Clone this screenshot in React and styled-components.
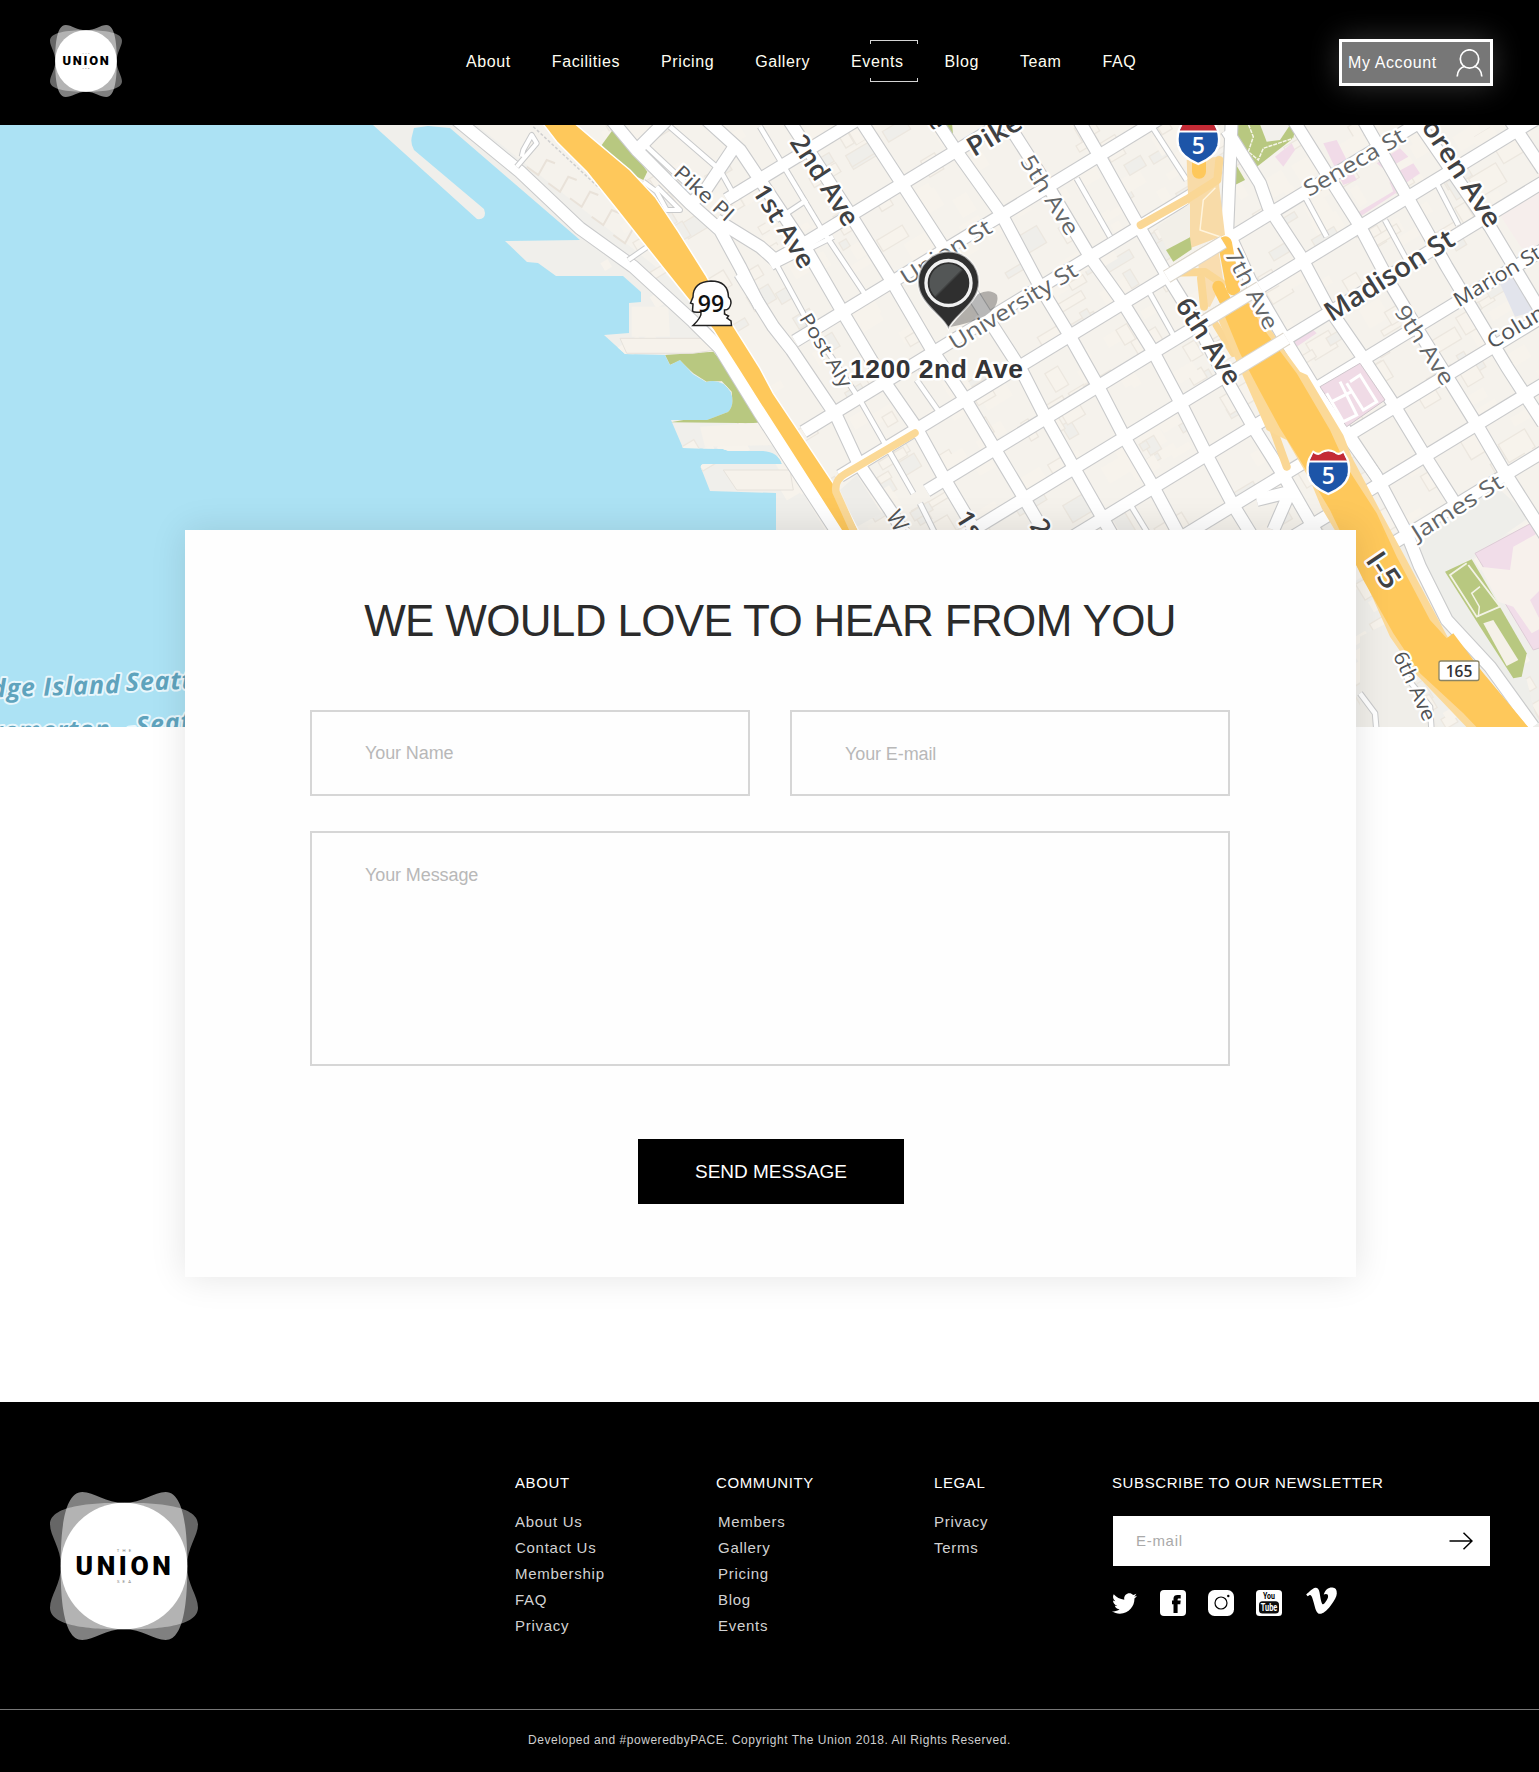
import React from "react";
import styled, { createGlobalStyle } from "styled-components";
import { FaTwitter, FaVimeoV } from "react-icons/fa";

const GlobalStyle = createGlobalStyle`
  *, *::before, *::after { box-sizing: border-box; }
  body { margin: 0; background: #fff; font-family: "Liberation Sans", Arial, Helvetica, sans-serif; }
  input, textarea, button { font-family: inherit; border-radius: 0; outline: none; }
`;

const Page = styled.div`
  width: 1539px;
  height: 1772px;
  display: flex;
  flex-direction: column;
  overflow: hidden;
`;

/* ---------- header ---------- */

const Header = styled.header`
  flex: none;
  height: 125px;
  padding: 0 46px 0 50px;
  display: flex;
  align-items: center;
  background: #000;
`;

const LogoSvg = styled.svg`
  display: block;
  flex: none;
  width: ${(p) => p.$size}px;
  height: ${(p) => p.$size}px;
  margin-bottom: ${(p) => p.$lift || 0}px;
`;

const Nav = styled.nav`
  display: flex;
  gap: 41px;
  margin: 0 0 1px 344px;
`;

const NavLink = styled.a`
  position: relative;
  font-size: 16px;
  line-height: 20px;
  letter-spacing: 0.6px;
  color: #fffef2;
`;

const ActiveNavLink = styled(NavLink)`
  &::before,
  &::after {
    content: "";
    position: absolute;
    left: 19px;
    width: 48px;
    height: 4px;
    border: 1px solid #d4d4d4;
  }
  &::before {
    top: -12px;
    border-bottom: 0;
  }
  &::after {
    top: 26px;
    border-top: 0;
  }
`;

const AccountButton = styled.button`
  display: flex;
  align-items: center;
  justify-content: space-between;
  width: 154px;
  height: 47px;
  margin-left: auto;
  padding: 0 7px 0 6px;
  border: 3px solid #fff;
  background: #777;
  color: #fff;
  font-size: 16px;
  letter-spacing: 0.6px;
  box-shadow: 0 0 30px rgba(255, 255, 255, 0.2);
`;

/* ---------- map ---------- */

const MapArea = styled.section`
  flex: none;
  height: 602px;
`;

const MapSvg = styled.svg`
  display: block;
  width: 1539px;
  height: 602px;
`;

/* ---------- contact card ---------- */

const Card = styled.form`
  position: relative;
  flex: none;
  display: flex;
  flex-direction: column;
  width: 1171px;
  height: 747px;
  margin: -197px 0 125px 185px;
  padding: 65px 126px 0 125px;
  background: #fefefe;
  box-shadow: 0 0 34px rgba(0, 0, 0, 0.11);
`;

const Title = styled.h1`
  margin: 0 0 63px;
  font-size: 44px;
  font-weight: 400;
  line-height: 52px;
  letter-spacing: -0.65px;
  text-align: center;
  white-space: nowrap;
  color: #2b2b2b;
`;

const FieldRow = styled.div`
  display: flex;
  gap: 40px;
`;

const Input = styled.input`
  flex: 1;
  min-width: 0;
  height: 86px;
  padding: ${(p) => p.$drop || 0}px 53px 0;
  border: 2px solid #d6d6d6;
  background: transparent;
  font-size: 18px;
  letter-spacing: -0.1px;
  &::placeholder {
    color: #b8b8b8;
    opacity: 1;
  }
`;

const TextArea = styled.textarea`
  height: 235px;
  margin: 35px 0 73px;
  padding: 31px 53px;
  border: 2px solid #d6d6d6;
  background: transparent;
  font-size: 18px;
  line-height: 22px;
  letter-spacing: -0.1px;
  resize: none;
  &::placeholder {
    color: #b8b8b8;
    opacity: 1;
  }
`;

const SendButton = styled.button`
  width: 266px;
  height: 65px;
  margin-left: 328px;
  padding: 0;
  border: 0;
  background: #000;
  color: #fff;
  font-size: 19px;
`;

/* ---------- footer ---------- */

const Footer = styled.footer`
  flex: 1;
  background: #000;
  color: #fff;
`;

const FooterMain = styled.div`
  display: grid;
  grid-template-columns: 465px 201px 218px 178px 378px;
  height: 307px;
  padding-left: 50px;
  align-items: start;
`;

const FooterLogo = styled.div`
  padding-top: 90px;
`;

const Column = styled.div`
  padding-top: 68px;
`;

const ColumnTitle = styled.h2`
  margin: 0;
  font-size: 15px;
  font-weight: 400;
  line-height: 26px;
  letter-spacing: 0.6px;
  white-space: nowrap;
`;

const LinkList = styled.ul`
  list-style: none;
  margin: 13px 0 0 ${(p) => p.$indent || 0}px;
  padding: 0;
`;

const LinkItem = styled.li`
  font-size: 15px;
  line-height: 26px;
  letter-spacing: 0.72px;
  color: #d2d2d2;
`;

const Newsletter = styled.div`
  display: flex;
  align-items: center;
  justify-content: space-between;
  width: 377px;
  height: 50px;
  margin: 20px 0 0 1px;
  padding: 0 17px 0 0;
  background: #fff;
`;

const NewsletterInput = styled.input`
  flex: 1;
  min-width: 0;
  padding: 0 0 2px 23px;
  border: 0;
  background: transparent;
  font-size: 15px;
  letter-spacing: 0.7px;
  &::placeholder {
    color: #a9a9a9;
    opacity: 1;
  }
`;

const Socials = styled.div`
  display: flex;
  align-items: center;
  height: 26px;
  margin-top: 24px;
  svg {
    display: block;
    flex: none;
  }
`;

const SocialSlot = styled.span`
  display: block;
  width: 48px;
  margin-bottom: ${(p) => p.$lift || 0}px;
`;

const Copyright = styled.div`
  border-top: 1px solid #777;
  height: 63px;
  display: flex;
  justify-content: center;
  padding-top: 21px;
  font-size: 12px;
  line-height: 18px;
  letter-spacing: 0.53px;
  color: #cfcfcf;
`;

const LOBE =
  "M74 10.7C48 10.7 0 12 0 32.3C0 44 11 56 11 74C11 92 0 104 0 115.7C0 136 48 137.3 74 137.3C100 137.3 148 136 148 115.7C148 104 137 92 137 74C137 56 148 44 148 32.3C148 12 100 10.7 74 10.7Z";

function Logo({ size, lift }) {
  return (
    <LogoSvg $size={size} $lift={lift} viewBox="0 0 148 148">
      <path d={LOBE} fill="#fff" opacity="0.4" />
      <path d={LOBE} fill="#fff" opacity="0.5" transform="rotate(90 74 74)" />
      <circle cx="74" cy="74" r="63.3" fill="#fff" />
      <text x="75.5" y="59.5" fontSize="4.2" textAnchor="middle" letterSpacing="3.2" fill="#777" fontFamily="Roboto, sans-serif">THE</text>
      <text x="25.5" y="83" fontSize="25.5" fontWeight="900" letterSpacing="3.5" textLength="99" lengthAdjust="spacingAndGlyphs" fill="#000" fontFamily="Roboto, sans-serif">UNION</text>
      <text x="75.5" y="90.5" fontSize="4.2" textAnchor="middle" letterSpacing="3.2" fill="#777" fontFamily="Roboto, sans-serif">SEA</text>
    </LogoSvg>
  );
}

/* ---------- map data ----------
   Points are in tiles drawn at three times the page scale, each with its own origin. */

const tile = (ox, oy) => (pts) =>
  pts.map(([x, y]) => `${(ox + x / 3).toFixed(1)},${(oy + y / 3).toFixed(1)}`).join(" ");
const west = tile(360, 120);
const mid = tile(740, 120);
const east = tile(1130, 120);
const south = tile(1130, 420);

const street = (c, from, to) => mid([[from, c - 0.61 * from], [to, c - 0.61 * to]]);

const STREETS = [
  street(214, -40, 400),
  street(488, 90, 900),
  street(764, 165, 1300),
  street(1051, 190, 1360),
  street(1251, 300, 2100),
  street(1454, 560, 2500),
  street(1656, 700, 2500),
  street(1859, 900, 2500),
  street(2059, 1100, 2500),
  street(2262, 1300, 2500),
  street(2465, 1850, 2500),
];

const AVENUES = [
  west([[1030, -10], [1140, 90], [1340, 390], [1450, 580], [1570, 780], [1670, 925], [1750, 1070], [1850, 1240]]),
  mid([[0, 460], [100, 620], [155, 690], [290, 890], [355, 1030], [450, 1170], [500, 1250]]),
  mid([[140, -10], [332, 285], [455, 483], [573, 685], [680, 845], [765, 988], [850, 1130], [920, 1250]]),
  mid([[355, -10], [485, 190], [615, 390], [750, 605], [845, 752], [917, 893], [1000, 1040], [1120, 1250]]),
  mid([[580, -10], [650, 95], [785, 284], [900, 500], [985, 640], [1075, 800], [1155, 955], [1240, 1100], [1320, 1250]]),
  mid([[790, -10], [925, 200], [1050, 410], [1150, 550], [1240, 695], [1322, 850], [1400, 1005], [1480, 1156], [1550, 1270]]),
  mid([[1010, -10], [1085, 120], [1180, 290], [1280, 465], [1370, 610], [1460, 780], [1545, 930], [1630, 1065], [1730, 1240]]),
  east([[305, 0], [292, 330], [360, 480], [460, 650], [545, 790], [640, 930], [740, 1070]]),
  east([[290, 30], [390, 190], [415, 260], [510, 405], [590, 555], [690, 700], [795, 860], [880, 1000], [975, 1150]]),
  east([[490, 0], [590, 160], [685, 310], [780, 490], [870, 640], [970, 800], [1050, 930], [1120, 1050], [1260, 1270]]),
  east([[700, 0], [840, 245], [950, 440], [1040, 590], [1130, 740], [1240, 910]]),
  east([[860, 0], [1080, 320], [1170, 470], [1260, 620]]),
  east([[1140, 0], [1240, 150]]),
  west([[755, 0], [830, 90], [900, 160], [990, 250], [1080, 330], [1140, 440], [1200, 560]]),
  west([[1070, 300], [1200, 380], [1245, 420], [1300, 390]]),
  west([[830, 90], [920, 0]]),
  west([[1130, 70], [1030, 220], [990, 250]]),
  south([[380, 240], [480, 215], [430, 330]]),
  south([[640, 20], [740, 170], [830, 340], [870, 440], [950, 600], [1080, 740], [1210, 920]]),
];

const ALLEYS = [
  west([[850, 70], [1010, 220]]),
  west([[930, 20], [1080, 150], [1130, 240]]),
  mid([[60, 20], [240, 320], [380, 530]]),
  mid([[110, 435], [200, 600], [360, 840], [520, 1120]]),
  mid([[110, 435], [280, 350]]),
  mid([[110, 300], [200, 240]]),
  mid([[530, 780], [600, 880]]),
  mid([[540, 1150], [590, 1250]]),
  mid([[1010, 175], [1110, 350]]),
  east([[60, 10], [170, 180]]),
  east([[60, 520], [130, 645]]),
  east([[525, 230], [590, 350]]),
  east([[765, 300], [830, 420]]),
  east([[920, 190], [985, 315]]),
  south([[5, 260], [60, 350]]),
  south([[690, 820], [735, 880], [740, 940]]),
  south([[820, 760], [900, 860], [905, 940]]),
];

const PARCELS = [];
let seed = 11;
const rand = () => {
  seed = (seed * 16807) % 2147483647;
  return seed / 2147483647;
};
for (let i = 0; i < 560; i += 1) {
  PARCELS.push({
    x: 600 + rand() * 939,
    y: 120 + rand() * 600,
    w: 8 + rand() * 24,
    h: 6 + rand() * 16,
    kind: rand(),
  });
}

const TONES = {
  dark: { fill: "#3f4143", weight: 600 },
  mid: { fill: "#505355", weight: 500 },
  soft: { fill: "#626567", weight: 400 },
};

const LABELS = [
  ["Pike Pl", 704, 193, 42, 72, 20, "mid"],
  ["1st Ave", 784, 226, 58, 94, 25, "dark"],
  ["2nd Ave", 825, 180, 57, 103, 26, "dark"],
  ["Post Aly", 826, 350, 59, 83, 19, "mid"],
  ["5th Ave", 1050, 195, 58, 90, 22, "soft"],
  ["4th Ave", 917, 87, 58, 94, 25, "dark"],
  ["Union St", 946, 252, -32, 103, 22, "soft"],
  ["University St", 1013, 306, -31.5, 146, 22, "soft"],
  ["Pike St", 1009, 125, -31, 94, 27, "dark"],
  ["Western Ave", 925, 566, 59, 126, 23, "mid"],
  ["1st Ave", 987, 552, 58, 94, 25, "dark"],
  ["2nd Ave", 1065, 564, 57, 103, 26, "dark"],
  ["Seneca St", 1354, 162, -30, 113, 22, "soft"],
  ["Boren Ave", 1457, 165, 57, 142, 26, "dark"],
  ["Madison St", 1389, 275, -32, 148, 27, "dark"],
  ["Marion St", 1497, 276, -31, 98, 20, "mid"],
  ["Columbia St", 1545, 309, -31, 132, 21, "mid"],
  ["9th Ave", 1425, 345, 57, 90, 22, "soft"],
  ["7th Ave", 1252, 289, 62, 88, 22, "soft"],
  ["6th Ave", 1209, 341, 57, 98, 26, "dark"],
  ["James St", 1457, 507, -32, 103, 22, "soft"],
  ["I-5", 1384, 570, 56, 38, 29, "dark"],
  ["6th Ave", 1415, 686, 65, 74, 20, "mid"],
];

const LAND =
  "M373 125L477 219Q485 220 485 213L484 209L414 150Q410 143 412 136L414 128L428 126L450 128L580 240L505 241L527 262L538 263L556 276L623 276L641 292V302L629 303V333L604 335L625 354L665 355L670 365L680 360L693 374L706 382Q722 378 731 392Q735 405 728 412L707 420H671L683 448L723 449L729 451L763 451Q778 452 782 464H705Q700 464 701 468L710 491L776 493V727H1539V125Z";

function Interstate({ x, y }) {
  return (
    <g transform={`translate(${x} ${y})`}>
      <path
        d="M-15 -21Q-10 -17 -6 -21Q0 -24 6 -21Q10 -17 15 -21L19 -14Q22 -6 20 3Q17 14 0 21Q-17 14 -20 3Q-22 -6 -19 -14Z"
        fill="#1d55a8"
        stroke="#fff"
        strokeWidth="2.4"
      />
      <path d="M-15 -20Q-10 -16 -6 -20Q0 -23 6 -20Q10 -16 15 -20L18.5 -12H-18.5Z" fill="#c42a35" />
      <path d="M-19.5 -11.5H19.5" stroke="#fff" strokeWidth="1.8" />
      <text x="0" y="11" fontSize="23" fontWeight="600" textAnchor="middle" fill="#fff" fontFamily='"Open Sans", sans-serif'>5</text>
    </g>
  );
}

function CityMap() {
  return (
    <MapSvg viewBox="0 125 1539 602">
      <defs>
        <clipPath id="land"><path d={LAND} /></clipPath>
        <linearGradient id="pinFace" x1="0" y1="0" x2="1" y2="1">
          <stop offset="0.48" stopColor="#535656" />
          <stop offset="0.53" stopColor="#2f2f2f" />
        </linearGradient>
      </defs>
      <rect x="0" y="125" width="1539" height="602" fill="#ace2f4" />
      <path d={LAND} fill="#f0efeb" />

      <g clipPath="url(#land)">
        <polygon points={west([[330, 0], [1140, 640], [1200, 900], [1400, 1240], [3537, 1240], [3537, 2000], [3537, 0]])} fill="#f5f2ec" />
        {PARCELS.map((p, i) => (
          <rect
            key={i}
            x={p.x}
            y={p.y}
            width={p.w}
            height={p.h}
            transform={`rotate(-31 ${p.x} ${p.y})`}
            fill={p.kind > 0.78 ? "#efeeea" : "#f7f3ec"}
            stroke={p.kind > 0.5 ? "#ece7df" : "none"}
            strokeWidth="1.3"
          />
        ))}
        <polygon points={south([[840, 350], [1100, 200], [1200, 290], [1030, 410], [960, 450], [1050, 630], [1190, 780], [1227, 930], [1190, 900], [1060, 740], [930, 560]])} fill="#eeeeea" />
        <polygon points={south([[690, 650], [770, 610], [930, 930], [690, 930]])} fill="#f0eee9" />
        <polygon points={mid([[300, 1110], [350, 1065], [425, 1180], [350, 1220]])} fill="#eeede9" />

        <polygon points={west([[915, 705], [1060, 695], [1130, 780], [1200, 910], [932, 907], [1025, 890], [1080, 870], [1115, 850], [1115, 815], [1085, 783], [1040, 785], [1000, 760], [960, 722], [930, 735]])} fill="#b8c880" />
        <polygon points={west([[725, 75], [765, 20], [830, 110], [862, 155], [850, 180], [800, 155]])} fill="#b8c880" />
        <polygon points={mid([[610, 0], [635, 0], [640, 50]])} fill="#b8c880" />
        <polygon points={east([[315, 0], [500, 0], [490, 55], [375, 145], [315, 70]])} fill="#b8c880" />
        <polygon points={east([[385, 0], [490, 0], [450, 60], [410, 65]])} fill="#f2f0eb" />
        <polyline points={east([[350, 0], [370, 50], [355, 95], [385, 120], [400, 85], [490, 55]])} fill="none" stroke="#f5f5e8" strokeWidth="1.5" strokeDasharray="4 1" />
        <polygon points={east([[310, 120], [345, 180], [315, 195]])} fill="#b8c880" />
        <polygon points={south([[945, 455], [1025, 418], [1115, 570], [1190, 700], [1175, 770], [1150, 775], [1050, 620]])} fill="#b8c880" />
        <polyline points={south([[1010, 430], [960, 465], [1040, 590], [1110, 560], [1015, 435]])} fill="none" stroke="#f3f3e6" strokeWidth="1.8" />
        <polyline points={south([[1050, 500], [1025, 520], [1048, 560], [1045, 590]])} fill="none" stroke="#f3f3e6" strokeWidth="1.5" />
        <polygon points={south([[1060, 610], [1090, 600], [1165, 720], [1130, 738]])} fill="#f5f1e8" />

        <polygon points={east([[435, 110], [485, 70], [495, 90], [460, 140]])} fill="#f1dbe8" />
        <polygon points={east([[580, 70], [620, 60], [680, 180], [640, 195]])} fill="#f1dbe8" />
        <polygon points={east([[740, 130], [810, 85], [835, 110], [765, 150]])} fill="#f1dbe8" />
        <polygon points={east([[775, 170], [850, 130], [870, 160], [790, 215]])} fill="#f1dbe8" />
        <polygon points={east([[680, 280], [830, 190], [820, 205], [690, 290]])} fill="#f1dbe8" />
        <polygon points={east([[1100, 270], [1240, 190], [1240, 380], [1175, 385]])} fill="#f6eeec" />
        <polygon points={east([[485, 660], [545, 625], [560, 640], [500, 680]])} fill="#f1dbe8" />
        <polygon points={east([[1105, 480], [1145, 450], [1227, 570], [1155, 590]])} fill="#e2e4ec" />
        <polygon points={south([[1035, 400], [1240, 290], [1240, 680], [1210, 690]])} fill="#f1dde9" stroke="#ddccd6" />
        <polygon points={south([[1050, 440], [1140, 450], [1150, 380], [1240, 330], [1240, 500], [1200, 540], [1240, 620], [1205, 640], [1150, 560], [1105, 545]])} fill="#f7f1ec" />

        <g fill="none" stroke="#c9cacb" strokeLinejoin="round">
          <g strokeWidth="14">
            {STREETS.map((d, i) => <polyline key={i} points={d} />)}
            {AVENUES.map((d, i) => <polyline key={i} points={d} />)}
          </g>
          <g strokeWidth="6.5">{ALLEYS.map((d, i) => <polyline key={i} points={d} />)}</g>
        </g>
        <g fill="none" stroke="#fff" strokeLinejoin="round">
          <g strokeWidth="11.8">
            {STREETS.map((d, i) => <polyline key={i} points={d} />)}
            {AVENUES.map((d, i) => <polyline key={i} points={d} />)}
          </g>
          <g strokeWidth="4.5">{ALLEYS.map((d, i) => <polyline key={i} points={d} />)}</g>
        </g>

        <polygon points={east([[570, 800], [690, 730], [765, 840], [650, 920]])} fill="#f0dbe6" stroke="#cfc6cc" />
        <polyline points={east([[590, 820], [640, 905], [680, 885], [630, 785]])} fill="none" stroke="#fff" strokeWidth="3" />
        <polyline points={east([[650, 790], [700, 870], [740, 845], [690, 765], [660, 785]])} fill="none" stroke="#fff" strokeWidth="3" />
        <polyline points={east([[605, 845], [665, 815]])} fill="none" stroke="#fff" strokeWidth="3" />

        {/* waterfront piers and quay */}
        <polygon points={west([[780, 655], [1040, 655], [1065, 690], [1000, 700], [800, 700]])} fill="#f6f2eb" stroke="#e6e2db" />
        <polygon points={west([[815, 560], [925, 560], [930, 650], [815, 650]])} fill="#f6f2eb" />
        <polygon points={west([[1020, 920], [1240, 905], [1260, 975], [1035, 980]])} fill="#f6f2eb" />
        <polygon points={west([[1090, 1050], [1290, 1050], [1300, 1110], [1130, 1110]])} fill="#f6f2eb" stroke="#e6e2db" />
        {[[510, 120], [575, 170], [640, 215], [705, 270], [770, 325]].map(([x, y]) => (
          <polyline key={x} points={west([[x - 10, y + 20], [x + 25, y + 45], [x + 50, y], [x + 75, y + 10]])} fill="none" stroke="#e9e2d9" strokeWidth="2" />
        ))}
        <polyline points={west([[520, 20], [730, 215]])} fill="none" stroke="#cfcfcf" strokeWidth="1.5" strokeDasharray="3 2" />
        <g fill="none" strokeLinejoin="round">
          {[["#c9cacb", 14], ["#fff", 12]].map(([c, w]) => (
            <polyline key={c} points={west([[285, -5], [480, 155], [660, 325], [820, 440], [1000, 605], [1080, 685], [1200, 880], [1290, 1020], [1440, 1250]])} stroke={c} strokeWidth={w} />
          ))}
          {[["#c9cacb", 6], ["#fff", 4]].map(([c, w]) => (
            <g key={c} stroke={c} strokeWidth={w}>
              <polyline points={west([[470, 140], [500, 105], [530, 70], [515, 45], [490, 90], [485, 110]])} />
              <polyline points={west([[805, 420], [870, 375]])} />
              <polyline points={west([[850, 185], [890, 215], [920, 270], [960, 270], [890, 200]])} />
            </g>
          ))}
        </g>
      </g>

      {/* state route */}
      <polygon
        points={west([[540, 0], [632, 0], [705, 62], [810, 150], [885, 230], [955, 335], [1037, 465], [1115, 610], [1200, 745], [1240, 820], [1340, 970], [1420, 1090], [1500, 1240], [1450, 1240], [1290, 990], [1200, 850], [1140, 755], [1060, 630], [955, 500], [850, 368], [768, 265], [680, 155], [590, 65]])}
        fill="#fec85b"
        stroke="#fff"
        strokeWidth="1.5"
      />
      <path d="M915 433L845 474Q834 480 836 492L855 534" fill="none" stroke="#fbd996" strokeWidth="7.5" strokeLinecap="round" />

      {/* interstate */}
      <g strokeLinecap="round" strokeLinejoin="round">
        <polygon points={east([[170, 120], [265, 110], [268, 200], [285, 345], [180, 385], [175, 250]])} fill="#f8dba8" />
        <polygon points={east([[180, 250], [160, 265], [80, 320], [110, 390], [180, 350]])} fill="#f2efe8" />
        <polygon points={east([[108, 390], [180, 352], [185, 388], [130, 425]])} fill="#b8c880" />
        <polygon points={east([[205, 420], [265, 390], [280, 480], [240, 560], [210, 560]])} fill="#f9ddb0" />
        <polyline points={east([[255, 205], [220, 240], [210, 330], [270, 350]])} fill="none" stroke="#fff4dd" strokeWidth="1.5" />
        <g fill="none" stroke="#fad795">
          <polyline points={east([[32, 315], [170, 238], [262, 180], [268, 120]])} strokeWidth="8" />
          <polyline points={east([[122, 458], [225, 456], [275, 490]])} strokeWidth="8" />
          <polyline points={east([[213, 475], [222, 560]])} strokeWidth="8" />
          <polyline points={east([[258, 615], [310, 700]])} strokeWidth="7" />
          <polyline points={south([[420, 0], [470, 140]])} strokeWidth="8" />
        </g>
        <polygon
          points={east([[265, 600], [350, 540], [430, 640], [455, 680], [510, 755], [532, 765], [640, 945], [665, 1010], [760, 1190], [830, 1320], [955, 1555], [1060, 1660], [1195, 1822], [1010, 1822], [860, 1665], [780, 1550], [700, 1370], [620, 1240], [575, 1165], [540, 1080], [470, 960], [410, 930], [335, 760]])}
          fill="#fbd998"
        />
        <polygon
          points={east([[285, 590], [352, 545], [410, 640], [500, 760], [600, 930], [650, 1040], [740, 1180], [800, 1310], [900, 1500], [950, 1555], [970, 1540], [1060, 1660], [1195, 1822], [1040, 1822], [1000, 1780], [870, 1660], [790, 1540], [700, 1380], [600, 1170], [510, 1020], [450, 925], [385, 805], [330, 700]])}
          fill="#fec85b"
        />
        <polyline points={east([[207, 100], [207, 155]])} fill="none" stroke="#fec85b" strokeWidth="14" />
        <polyline points={east([[285, 370], [310, 505]])} fill="none" stroke="#fec85b" strokeWidth="14" />
        <polyline points={east([[265, 500], [295, 560]])} fill="none" stroke="#fec85b" strokeWidth="12" />
        <g fill="none" strokeLinecap="butt">
          {[["#dcd6cb", 14], ["#fff", 12]].map(([c, w]) => (
            <g key={c} stroke={c} strokeWidth={w}>
              <polyline points={street(1251, 1280, 1450)} />
              <polyline points={street(1454, 1400, 1560)} />
              <polyline points={street(1656, 1455, 1640)} />
            </g>
          ))}
        </g>
      </g>

      <g fontFamily='"Open Sans", "Noto Sans", sans-serif' stroke="#fff" strokeWidth="4.5" strokeLinejoin="round" paintOrder="stroke" textAnchor="middle">
        {LABELS.map(([text, x, y, angle, len, size, tone], i) => (
          <text
            key={i}
            transform={`translate(${x} ${y}) rotate(${angle})`}
            y={size * 0.36}
            fontSize={size}
            fontWeight={TONES[tone].weight}
            fill={TONES[tone].fill}
            textLength={len}
            lengthAdjust="spacingAndGlyphs"
          >
            {text}
          </text>
        ))}
        <g fontStyle="italic" fontWeight="700" fontSize="25" fill="#5fa3bd" stroke="#e9f7fc" strokeWidth="4" letterSpacing="0.9">
          <text transform="translate(121 693) rotate(-2)" textAnchor="end">Bainbridge Island</text>
          <text transform="translate(126 691) rotate(-2)" textAnchor="start">Seattle</text>
          <text transform="translate(111 738) rotate(-1)" textAnchor="end">Bremerton</text>
          <text transform="translate(128 736) rotate(-6)" textAnchor="start">-Seattle</text>
        </g>
      </g>

      {/* pin */}
      <g>
        <path d="M950 327L978 294Q990 288 997 295Q1000 306 985 316Q968 324 950 327Z" fill="#000" opacity="0.28" />
        <path d="M948.500 329C944 316 918 304 918 282A30.500 30.500 0 0 1 979 282C979 304 953 316 948.500 329Z" fill="#2f2f2f" stroke="#fff" strokeOpacity="0.6" strokeWidth="2" />
        <circle cx="948.5" cy="283" r="22.500" fill="none" stroke="#f1f1f1" strokeWidth="3.4" />
        <circle cx="948.5" cy="283" r="19" fill="url(#pinFace)" />
      </g>
      <text
        x="850"
        y="378"
        fontSize="26.5"
        fontWeight="700"
        textLength="173"
        fill="#333437"
        stroke="#fff"
        strokeWidth="5"
        strokeLinejoin="round"
        paintOrder="stroke"
        fontFamily='"Liberation Sans", Arial, sans-serif'
      >
        1200 2nd Ave
      </text>

      <path
        d="M693 325.500H731.500L731 321L727 318L728.500 316L724.500 314V310Q730 310 731 303Q731 299 728.500 297Q728 281 711 281Q693 282 693 297L690.500 303L693 304L692.500 311Q694 313 701 312Q702 317 693 325.500Z"
        fill="#fff"
        stroke="#222"
        strokeWidth="1.5"
      />
      <text x="711" y="312" fontSize="23" fontWeight="600" textAnchor="middle" fill="#111" fontFamily='"Open Sans", sans-serif'>99</text>

      <Interstate x={1198.3} y={143} />
      <Interstate x={1328.3} y={473} />

      <rect x="1439" y="661" width="40" height="19.500" rx="2" fill="#fff" stroke="#8a8464" strokeWidth="1.300" />
      <text x="1459" y="676.500" fontSize="15.500" fontWeight="600" textAnchor="middle" fill="#333" fontFamily='"Open Sans", sans-serif'>165</text>
    </MapSvg>
  );
}

/* ---------- icons ---------- */

const UserIcon = () => (
  <svg width="27" height="28" viewBox="0 0 27 28" fill="none" stroke="#fff" strokeWidth="1.7">
    <circle cx="13.500" cy="10" r="9.200" />
    <path d="M1.200 27.500C1.400 22.500 4.500 18.500 9 17.300M18 17.300C22.500 18.500 25.600 22.500 25.800 27.500" />
  </svg>
);

const ArrowIcon = () => (
  <svg width="24" height="18" viewBox="0 0 24 18" fill="none" stroke="#000" strokeWidth="1.5">
    <path d="M0.500 9H23M14.500 0.800L23 9L14.500 17.200" />
  </svg>
);

const FacebookIcon = () => (
  <svg width="26" height="26" viewBox="0 0 26 26">
    <rect width="26" height="26" rx="4" fill="#fff" />
    <path d="M13.500 23V14.200H12V10.500H13.500V8.500C13.500 6 15.200 5 17.500 5H20.700V8.600H18.800C17.900 8.600 17.600 9 17.600 9.700V10.500H20.700L20.300 14.200H17.600V23Z" fill="#000" />
  </svg>
);

const InstagramIcon = () => (
  <svg width="26" height="26" viewBox="0 0 26 26">
    <rect width="26" height="26" rx="6.500" fill="#fff" />
    <circle cx="13" cy="13" r="6" fill="none" stroke="#000" strokeWidth="1.2" />
    <circle cx="20.300" cy="6" r="1.200" fill="#000" />
  </svg>
);

const YoutubeIcon = () => (
  <svg width="26" height="26" viewBox="0 0 26 26" fontFamily="Roboto, sans-serif" fontWeight="700" textAnchor="middle">
    <rect width="26" height="26" rx="3.500" fill="#fff" />
    <rect x="3" y="11.300" width="20" height="12.300" rx="3.500" fill="#0c0c0c" />
    <text x="13" y="9" fontSize="9" textLength="12" lengthAdjust="spacingAndGlyphs" fill="#000">You</text>
    <text x="13" y="21" fontSize="10" textLength="16.500" lengthAdjust="spacingAndGlyphs" fill="#fff">Tube</text>
  </svg>
);

const COLUMNS = [
  { title: "ABOUT", links: ["About Us", "Contact Us", "Membership", "FAQ", "Privacy"] },
  { title: "COMMUNITY", links: ["Members", "Gallery", "Pricing", "Blog", "Events"], indent: 2 },
  { title: "LEGAL", links: ["Privacy", "Terms"] },
];

const NAV = ["About", "Facilities", "Pricing", "Gallery", "Events", "Blog", "Team", "FAQ"];

export default function App() {
  return (
    <Page>
      <GlobalStyle />
      <Header>
        <Logo size={72} lift={3} />
        <Nav>
          {NAV.map((label) => {
            const Item = label === "Events" ? ActiveNavLink : NavLink;
            return <Item key={label}>{label}</Item>;
          })}
        </Nav>
        <AccountButton type="button">
          My Account
          <UserIcon />
        </AccountButton>
      </Header>

      <MapArea>
        <CityMap />
      </MapArea>

      <Card>
        <Title>WE WOULD LOVE TO HEAR FROM YOU</Title>
        <FieldRow>
          <Input placeholder="Your Name" />
          <Input placeholder="Your E-mail" $drop={2} />
        </FieldRow>
        <TextArea placeholder="Your Message" />
        <SendButton type="button">SEND MESSAGE</SendButton>
      </Card>

      <Footer>
        <FooterMain>
          <FooterLogo>
            <Logo size={148} />
          </FooterLogo>
          {COLUMNS.map((col) => (
            <Column key={col.title}>
              <ColumnTitle>{col.title}</ColumnTitle>
              <LinkList $indent={col.indent}>
                {col.links.map((l) => <LinkItem key={l}>{l}</LinkItem>)}
              </LinkList>
            </Column>
          ))}
          <Column>
            <ColumnTitle>SUBSCRIBE TO OUR NEWSLETTER</ColumnTitle>
            <Newsletter>
              <NewsletterInput placeholder="E-mail" />
              <ArrowIcon />
            </Newsletter>
            <Socials>
              <SocialSlot><FaTwitter size={25} color="#fff" /></SocialSlot>
              <SocialSlot><FacebookIcon /></SocialSlot>
              <SocialSlot><InstagramIcon /></SocialSlot>
              <SocialSlot><YoutubeIcon /></SocialSlot>
              <SocialSlot $lift={5}><FaVimeoV size={35} color="#fff" /></SocialSlot>
            </Socials>
          </Column>
        </FooterMain>
        <Copyright>Developed and #poweredbyPACE. Copyright The Union 2018. All Rights Reserved.</Copyright>
      </Footer>
    </Page>
  );
}
